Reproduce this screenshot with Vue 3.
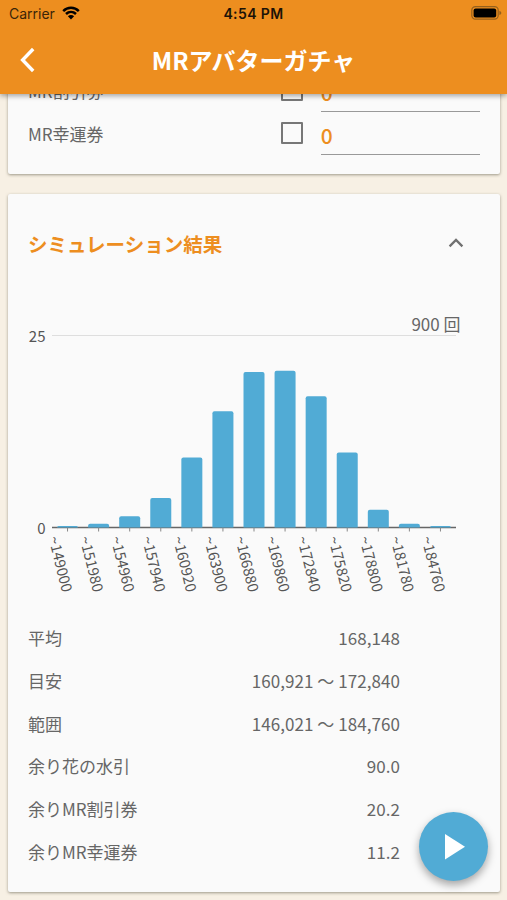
<template>
  <div class="app">
    <header class="header">
      <div class="status-bar">
        <div class="carrier">
          <span>Carrier</span>
          <svg class="wifi" viewBox="0 0 18 14">
            <path d="M1.2 5.1 C5.6 0.7 12.4 0.7 16.8 5.1" />
            <path d="M4 8 C6.9 5.2 11.1 5.2 14 8" />
            <path class="wifi-dot" d="M9 13.4 L5.9 10.3 C7.6 8.7 10.4 8.7 12.1 10.3 Z" />
          </svg>
        </div>
        <div class="time">4:54 PM</div>
        <div class="battery">
          <svg width="31" height="14" viewBox="0 0 31 14">
            <rect class="battery-case" x="0.8" y="0.6" width="26.4" height="12.6" rx="3.6" />
            <rect x="2.6" y="2.4" width="22.6" height="9" rx="2" />
            <path class="battery-tip" d="M28.4 4.8 Q30.4 5.6 30.4 6.9 Q30.4 8.2 28.4 9 Z" />
          </svg>
        </div>
      </div>
      <div class="toolbar">
        <svg class="back" width="16" height="26" viewBox="0 0 16 26">
          <path d="M13.2 2 L2.6 13 L13.2 24" />
        </svg>
        <h1 class="title">MRアバターガチャ</h1>
      </div>
    </header>

    <main class="content">
      <section class="card ticket-card">
        <div v-for="ticket in tickets" :key="ticket.name" class="ticket-row">
          <span class="ticket-name">{{ ticket.name }}</span>
          <span class="checkbox"></span>
          <span class="ticket-input">{{ ticket.count }}</span>
        </div>
      </section>

      <section class="card result-card">
        <div class="result-header">
          <h2 class="result-title">シミュレーション結果</h2>
          <svg width="16" height="10" viewBox="0 0 16 10">
            <path d="M1.6 8.4 L8 2 L14.4 8.4" />
          </svg>
        </div>

        <div class="trial-count">{{ trials }} 回</div>

        <svg class="chart" width="491" height="272" viewBox="0 0 491 272">
          <line class="grid-line" :x1="AXIS_LEFT" :x2="AXIS_RIGHT" :y1="AXIS_TOP" :y2="AXIS_TOP" />
          <text class="axis-label" x="37.5" y="8.2">{{ MAX_VALUE }}</text>
          <text class="axis-label" x="37.5" y="199.5">0</text>
          <line class="axis-line" :x1="AXIS_LEFT" :x2="AXIS_RIGHT" :y1="AXIS_BOTTOM" :y2="AXIS_BOTTOM" />
          <g v-for="bar in bars" :key="bar.label">
            <line class="tick" :x1="bar.center" :x2="bar.center" :y1="AXIS_BOTTOM" :y2="AXIS_BOTTOM + 4" />
            <path class="bar" :d="bar.path" />
            <text class="bar-label" dy="5.3" :transform="bar.labelTransform">~{{ bar.label }}</text>
          </g>
        </svg>

        <dl class="stats">
          <div v-for="stat in stats" :key="stat.name" class="stat-row">
            <dt>{{ stat.name }}</dt>
            <dd>{{ stat.value }}</dd>
          </div>
        </dl>
      </section>
    </main>

    <button class="fab">
      <svg width="20" height="26" viewBox="0 0 20 26">
        <path d="M0 0 L20 12.8 L0 25.5 Z" />
      </svg>
    </button>
  </div>
</template>

<script setup>
import { computed, ref } from 'vue'

// グラフの描画範囲
const AXIS_LEFT = 44
const AXIS_RIGHT = 448
const AXIS_TOP = 1.5
const AXIS_BOTTOM = 193.5
const BAR_WIDTH = 21
const MAX_VALUE = 25

const trials = ref(900)

const tickets = ref([
  { name: 'MR割引券', count: 0 },
  { name: 'MR幸運券', count: 0 }
])

const distribution = ref([
  { label: '149000', value: 0.2 },
  { label: '151980', value: 0.5 },
  { label: '154960', value: 1.45 },
  { label: '157940', value: 3.85 },
  { label: '160920', value: 9.1 },
  { label: '163900', value: 15.15 },
  { label: '166880', value: 20.25 },
  { label: '169860', value: 20.4 },
  { label: '172840', value: 17.1 },
  { label: '175820', value: 9.75 },
  { label: '178800', value: 2.3 },
  { label: '181780', value: 0.5 },
  { label: '184760', value: 0.2 }
])

const stats = ref([
  { name: '平均', value: '168,148' },
  { name: '目安', value: '160,921 〜 172,840' },
  { name: '範囲', value: '146,021 〜 184,760' },
  { name: '余り花の水引', value: '90.0' },
  { name: '余りMR割引券', value: '20.2' },
  { name: '余りMR幸運券', value: '11.2' }
])

// 棒グラフの座標を計算
const bars = computed(() => {
  const step = (AXIS_RIGHT - AXIS_LEFT) / distribution.value.length
  return distribution.value.map((item, i) => {
    const center = AXIS_LEFT + step * (i + 0.5)
    const height = (item.value / MAX_VALUE) * (AXIS_BOTTOM - AXIS_TOP)
    const x = center - BAR_WIDTH / 2
    const y = AXIS_BOTTOM - height
    const r = Math.min(2, height)
    return {
      label: item.label,
      center,
      path: `M${x} ${AXIS_BOTTOM} V${y + r} Q${x} ${y} ${x + r} ${y} H${x + BAR_WIDTH - r} Q${x + BAR_WIDTH} ${y} ${x + BAR_WIDTH} ${y + r} V${AXIS_BOTTOM} Z`,
      labelTransform: `translate(${center - 13.9} ${AXIS_BOTTOM + 9}) rotate(76)`
    }
  })
})
</script>

<style>
body {
  background: #f7f0e4;
}
</style>

<style scoped>
.app {
  display: flex;
  flex-direction: column;
  position: relative;
  width: 507px;
  height: 900px;
  overflow: hidden;
  background: #f7f0e4;
  color: #666;
  font-family: "Noto Sans CJK JP", sans-serif;
  font-size: 17px;
}

.header {
  position: relative;
  z-index: 2;
  flex: none;
  height: 94px;
  background: #ed8e1f;
  box-shadow: 0 2px 5px rgba(0, 0, 0, 0.35);
}

.status-bar {
  display: grid;
  grid-template-columns: 1fr auto 1fr;
  align-items: center;
  height: 27px;
  padding: 0 5px 0 9px;
  color: #1c1307;
  font-family: Inter, sans-serif;
  font-size: 14px;
}

.carrier {
  display: flex;
  align-items: center;
  gap: 7px;
  color: #3b2508;
}

.wifi {
  width: 18px;
  height: 14px;
  margin-top: -2px;
  fill: none;
  stroke: #000;
  stroke-width: 2.5;
}

.wifi .wifi-dot {
  fill: #000;
  stroke: none;
}

.time {
  margin-left: -4px;
  font-weight: 600;
  letter-spacing: 0.4px;
}

.battery {
  display: flex;
  justify-content: flex-end;
}

.battery svg {
  margin-top: -1px;
}

.battery-case {
  fill: none;
  stroke: #96601c;
  stroke-width: 1.2;
}

.battery-tip {
  fill: #96601c;
}

.toolbar {
  display: grid;
  grid-template-columns: 40px 1fr 40px;
  align-items: center;
  height: 65px;
}

.back {
  margin-left: 20px;
  fill: none;
  stroke: #fff;
  stroke-width: 3.4;
}

.title {
  margin: 0;
  color: #fff;
  font-size: 24px;
  font-weight: 700;
  line-height: 36px;
  text-align: center;
}

.content {
  display: flex;
  flex-direction: column;
  flex: 1;
  gap: 20px;
  min-height: 0;
  margin-top: -24px;
  padding: 0 7.5px 0 8px;
}

.card {
  flex: none;
  box-sizing: border-box;
  background: #fafafa;
  border-radius: 2px;
  box-shadow: 0 1px 3px rgba(70, 65, 45, 0.5);
}

.ticket-card {
  height: 104px;
}

.ticket-row {
  display: flex;
  align-items: center;
  height: 43px;
  padding: 0 20px;
}

.ticket-name {
  width: 253px;
  margin-top: -2px;
  line-height: 41px;
}

.checkbox {
  box-sizing: border-box;
  width: 22px;
  height: 22px;
  margin-top: -3px;
  border: 2px solid #777;
  border-radius: 1px;
}

.ticket-input {
  box-sizing: border-box;
  width: 159px;
  height: 36px;
  margin: 5px 0 0 18px;
  border-bottom: 1px solid #999;
  color: #ed8e1f;
  font-size: 21px;
  font-weight: 500;
  line-height: 33px;
}

.result-card {
  height: 698px;
}

.result-header {
  display: flex;
  align-items: center;
  justify-content: space-between;
  height: 99px;
  padding: 0 36px 0 20px;
}

.result-header svg {
  margin-top: -1px;
  fill: none;
  stroke: #707070;
  stroke-width: 2.3;
}

.result-title {
  margin: 0;
  color: #ed8e1f;
  font-size: 19.5px;
  font-weight: 700;
}

.trial-count {
  padding: 20px 39px 0 0;
  line-height: 21px;
  text-align: right;
}

.chart {
  display: block;
  overflow: visible;
}

.grid-line {
  stroke: #dedede;
}

.axis-line {
  stroke: #666;
  stroke-width: 1.3;
}

.tick {
  stroke: #888;
}

.bar {
  fill: #51abd5;
}

.axis-label {
  fill: #555;
  font-size: 15px;
  text-anchor: end;
}

.bar-label {
  fill: #555;
  font-size: 14.6px;
}

.stats {
  margin: 11px 0 0;
  padding: 0 99.5px 0 20px;
}

.stat-row {
  display: flex;
  justify-content: space-between;
  height: 42.8px;
  line-height: 42.4px;
}

.stat-row dd {
  margin: 0;
  letter-spacing: 0.06px;
}

.fab {
  display: flex;
  align-items: center;
  justify-content: center;
  position: absolute;
  right: 19.5px;
  bottom: 19px;
  z-index: 1;
  width: 69px;
  height: 69px;
  padding: 0 0 0 4px;
  border: none;
  border-radius: 50%;
  background: #51abd5;
  box-shadow: 0 4px 8px rgba(0, 0, 0, 0.35);
}

.fab path {
  fill: #fff;
}
</style>
